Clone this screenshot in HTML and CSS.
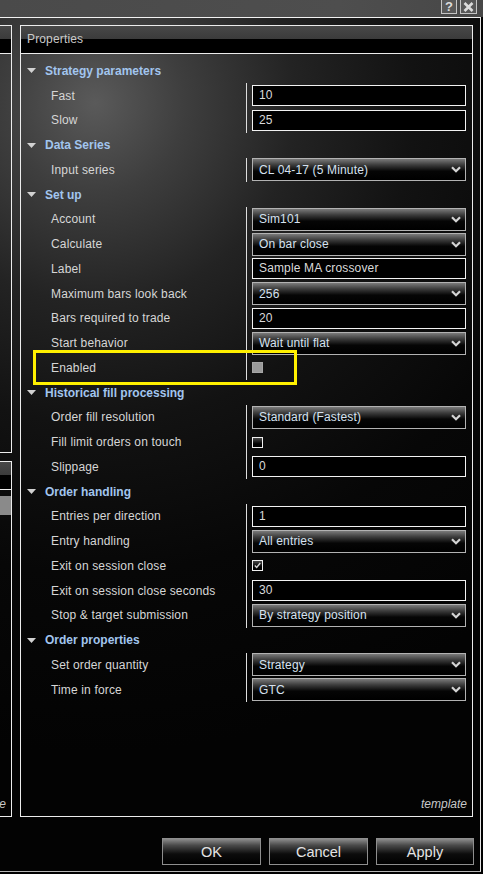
FILE: index.html
```html
<!DOCTYPE html>
<html lang="en">
<head>
    <meta charset="UTF-8">
    <meta name="viewport" content="width=device-width, initial-scale=1.0">
    <title>Strategy Properties</title>
    <link rel="stylesheet" href="styles.css">
</head>
<body>
    <!-- Window title bar -->
    <div class="titlebar">
        <span class="tb-btn">?</span>
        <span class="tb-btn">
            <svg width="11" height="10" viewBox="0 0 11 10"><path d="M1.5 1l8 8M9.5 1l-8 8" stroke="#dcdcdc" stroke-width="2.6" fill="none"/></svg>
        </span>
    </div>

    <div class="frame">
        <div class="main">
            <!-- Strategy list (cut off on the left) -->
            <div class="side">
                <div class="side-box side-top">
                    <div class="box-head"></div>
                </div>
                <div class="side-box side-bottom">
                    <div class="box-head"></div>
                    <div class="side-sel"></div>
                    <div class="box-foot"><span>template</span></div>
                </div>
            </div>

            <!-- Property grid -->
            <div class="props">
                <div class="box-head props-head">Properties</div>
                <div class="props-body">
                    <div class="cat"><svg class="caret" width="9" height="5" viewBox="0 0 9 5"><path d="M0 0h9L4.5 5z" fill="#d2d2d2"/></svg>Strategy parameters</div>
                    <div class="prop"><div class="prop-name">Fast</div><div class="prop-val"><div class="field">10</div></div></div>
                    <div class="prop"><div class="prop-name">Slow</div><div class="prop-val"><div class="field">25</div></div></div>

                    <div class="cat"><svg class="caret" width="9" height="5" viewBox="0 0 9 5"><path d="M0 0h9L4.5 5z" fill="#d2d2d2"/></svg>Data Series</div>
                    <div class="prop"><div class="prop-name">Input series</div><div class="prop-val"><div class="select"><span>CL 04-17 (5 Minute)</span><svg class="chev" width="10" height="7" viewBox="0 0 10 7"><path d="M1 1.2l4 4 4-4" stroke="#d4d4d4" stroke-width="2.2" fill="none"/></svg></div></div></div>

                    <div class="cat"><svg class="caret" width="9" height="5" viewBox="0 0 9 5"><path d="M0 0h9L4.5 5z" fill="#d2d2d2"/></svg>Set up</div>
                    <div class="prop"><div class="prop-name">Account</div><div class="prop-val"><div class="select"><span>Sim101</span><svg class="chev" width="10" height="7" viewBox="0 0 10 7"><path d="M1 1.2l4 4 4-4" stroke="#d4d4d4" stroke-width="2.2" fill="none"/></svg></div></div></div>
                    <div class="prop"><div class="prop-name">Calculate</div><div class="prop-val"><div class="select"><span>On bar close</span><svg class="chev" width="10" height="7" viewBox="0 0 10 7"><path d="M1 1.2l4 4 4-4" stroke="#d4d4d4" stroke-width="2.2" fill="none"/></svg></div></div></div>
                    <div class="prop"><div class="prop-name">Label</div><div class="prop-val"><div class="field">Sample MA crossover</div></div></div>
                    <div class="prop"><div class="prop-name">Maximum bars look back</div><div class="prop-val"><div class="select"><span>256</span><svg class="chev" width="10" height="7" viewBox="0 0 10 7"><path d="M1 1.2l4 4 4-4" stroke="#d4d4d4" stroke-width="2.2" fill="none"/></svg></div></div></div>
                    <div class="prop"><div class="prop-name">Bars required to trade</div><div class="prop-val"><div class="field">20</div></div></div>
                    <div class="prop"><div class="prop-name">Start behavior</div><div class="prop-val"><div class="select"><span>Wait until flat</span><svg class="chev" width="10" height="7" viewBox="0 0 10 7"><path d="M1 1.2l4 4 4-4" stroke="#d4d4d4" stroke-width="2.2" fill="none"/></svg></div></div></div>
                    <div class="prop prop-marked">
                        <div class="prop-name">Enabled</div><div class="prop-val"><span class="check check-off"></span></div>
                        <!-- annotation box drawn over the row -->
                        <div class="highlight"></div>
                    </div>

                    <div class="cat"><svg class="caret" width="9" height="5" viewBox="0 0 9 5"><path d="M0 0h9L4.5 5z" fill="#d2d2d2"/></svg>Historical fill processing</div>
                    <div class="prop"><div class="prop-name">Order fill resolution</div><div class="prop-val"><div class="select"><span>Standard (Fastest)</span><svg class="chev" width="10" height="7" viewBox="0 0 10 7"><path d="M1 1.2l4 4 4-4" stroke="#d4d4d4" stroke-width="2.2" fill="none"/></svg></div></div></div>
                    <div class="prop"><div class="prop-name">Fill limit orders on touch</div><div class="prop-val"><span class="check"></span></div></div>
                    <div class="prop"><div class="prop-name">Slippage</div><div class="prop-val"><div class="field">0</div></div></div>

                    <div class="cat"><svg class="caret" width="9" height="5" viewBox="0 0 9 5"><path d="M0 0h9L4.5 5z" fill="#d2d2d2"/></svg>Order handling</div>
                    <div class="prop"><div class="prop-name">Entries per direction</div><div class="prop-val"><div class="field">1</div></div></div>
                    <div class="prop"><div class="prop-name">Entry handling</div><div class="prop-val"><div class="select"><span>All entries</span><svg class="chev" width="10" height="7" viewBox="0 0 10 7"><path d="M1 1.2l4 4 4-4" stroke="#d4d4d4" stroke-width="2.2" fill="none"/></svg></div></div></div>
                    <div class="prop"><div class="prop-name">Exit on session close</div><div class="prop-val"><span class="check"><svg width="9" height="9" viewBox="0 0 9 9"><path d="M1.8 4.4l1.9 2 3.6-4.4" stroke="#d8d8d8" stroke-width="1.4" fill="none"/></svg></span></div></div>
                    <div class="prop"><div class="prop-name">Exit on session close seconds</div><div class="prop-val"><div class="field">30</div></div></div>
                    <div class="prop"><div class="prop-name">Stop &amp; target submission</div><div class="prop-val"><div class="select"><span>By strategy position</span><svg class="chev" width="10" height="7" viewBox="0 0 10 7"><path d="M1 1.2l4 4 4-4" stroke="#d4d4d4" stroke-width="2.2" fill="none"/></svg></div></div></div>

                    <div class="cat"><svg class="caret" width="9" height="5" viewBox="0 0 9 5"><path d="M0 0h9L4.5 5z" fill="#d2d2d2"/></svg>Order properties</div>
                    <div class="prop"><div class="prop-name">Set order quantity</div><div class="prop-val"><div class="select"><span>Strategy</span><svg class="chev" width="10" height="7" viewBox="0 0 10 7"><path d="M1 1.2l4 4 4-4" stroke="#d4d4d4" stroke-width="2.2" fill="none"/></svg></div></div></div>
                    <div class="prop"><div class="prop-name">Time in force</div><div class="prop-val"><div class="select"><span>GTC</span><svg class="chev" width="10" height="7" viewBox="0 0 10 7"><path d="M1 1.2l4 4 4-4" stroke="#d4d4d4" stroke-width="2.2" fill="none"/></svg></div></div></div>
                </div>
                <div class="box-foot"><span>template</span></div>
            </div>
        </div>

        <!-- Dialog buttons -->
        <div class="actions">
            <button class="btn btn-ok">OK</button>
            <button class="btn btn-cancel">Cancel</button>
            <button class="btn btn-apply">Apply</button>
        </div>
    </div>
</body>
</html>
```

FILE: styles.css
```css
:root {
    --line: #ececec;
    --label: #d6d6d6;
    --category: #a2c5ee;
    --value: #dadada;
}

body {
    margin: 0;
    width: 483px;
    height: 874px;
    overflow: hidden;
    background: #000;
    font-family: 'Liberation Sans', Arial, sans-serif;
    font-size: 12px;
    letter-spacing: 0.15px;
    color: var(--label);
}

/* title bar */
.titlebar {
    height: 17px;
    background: linear-gradient(to right, #4a4a4a, #4e4e4e 70%, #474747);
    display: flex;
    justify-content: flex-end;
    align-items: flex-start;
    gap: 3px;
    padding-right: 6px;
}

.tb-btn {
    height: 14px;
    width: 16px;
    box-sizing: border-box;
    border: 1px solid #c4c4c4;
    border-top: none;
    background: #585858;
    color: #dcdcdc;
    font-weight: bold;
    font-size: 13px;
    line-height: 13px;
    display: flex;
    align-items: center;
    justify-content: center;
}

.tb-btn:last-child {
    width: 17px;
}

/* main window */
.frame {
    width: 481px;
    height: 855px;
    box-sizing: border-box;
    border-top: 1px solid #f2f2f2;
    border-right: 1px solid #e6e6e6;
    border-bottom: 1px solid #b4b4b4;
    padding-top: 7px;
    background: radial-gradient(circle at 95px 85px, #5a5a5a 0, #3e3e3e 90px, #232323 200px, #121212 320px, #070707 470px, #030303 650px);
}

.main {
    display: flex;
    height: 792px;
}

.side {
    width: 12px;
    display: flex;
    flex-direction: column;
    gap: 8px;
    margin-right: 8px;
}

.side-box {
    border: 1px solid var(--line);
    border-left: none;
    box-sizing: border-box;
    display: flex;
    flex-direction: column;
    overflow: hidden;
}

.side-top {
    height: 428px;
}

.side-bottom {
    flex: 1;
}

.side-sel {
    height: 19px;
    margin-top: 6px;
    background: #8a8a8a;
}

.box-head {
    height: 27px;
    flex-shrink: 0;
    border-bottom: 1px solid var(--line);
    background: linear-gradient(#484848, #3b3b3b 48%, #000 48%);
}

.box-foot {
    margin-top: auto;
    display: flex;
    justify-content: flex-end;
    padding: 0 5px 5px;
    line-height: 14px;
    font-style: italic;
    letter-spacing: 0;
    color: #c8c8c8;
    white-space: nowrap;
}

.box-foot span {
    flex-shrink: 0;
}

/* property grid */
.props {
    width: 453px;
    box-sizing: border-box;
    border: 1px solid var(--line);
    display: flex;
    flex-direction: column;
}

.props-head {
    padding-left: 6px;
    line-height: 27px;
    color: #cacaca;
}

.props-body {
    padding-top: 4.5px;
}

.cat {
    height: 24.76px;
    display: flex;
    align-items: center;
    padding-left: 6px;
    font-weight: bold;
    letter-spacing: 0;
    color: var(--category);
}

.caret {
    margin-right: 9px;
}

.prop {
    height: 24.76px;
    display: flex;
}

.prop-marked {
    position: relative;
}

.prop-name {
    width: 226px;
    box-sizing: border-box;
    padding-left: 30px;
    border-right: 1px solid #dedede;
    display: flex;
    align-items: center;
    white-space: nowrap;
}

.prop-val {
    flex: 1;
    padding: 0 6px 0 5px;
    display: flex;
    align-items: center;
}

.field {
    width: 100%;
    height: 21px;
    box-sizing: border-box;
    border: 1px solid #f2f2f2;
    background: #000;
    padding-left: 6px;
    line-height: 19px;
    color: var(--value);
}

.select {
    width: 100%;
    height: 23px;
    box-sizing: border-box;
    border: 1px solid #b2b2b2;
    background: linear-gradient(#7a7a7a, #3c3c3c 28%, #050505 58%, #000);
    padding: 0 4px 0 6px;
    display: flex;
    align-items: center;
    justify-content: space-between;
    color: #d6e2f0;
}

.check {
    width: 11px;
    height: 11px;
    box-sizing: border-box;
    border: 1px solid #f0f0f0;
    background: linear-gradient(#4a4a4a, #000 65%);
    display: flex;
}

.check-off {
    border-color: #a6a6a6;
    background: #9a9a9a;
}

.highlight {
    position: absolute;
    left: 12px;
    top: -6px;
    width: 264px;
    height: 35px;
    box-sizing: border-box;
    border: 3px solid #fff000;
}

/* dialog buttons */
.actions {
    display: flex;
    justify-content: flex-end;
    gap: 8px;
    padding-right: 6px;
    margin-top: 21px;
}

.btn {
    width: 99px;
    height: 27px;
    border: 1px solid #8e8e8e;
    background: linear-gradient(#8c8c8c, #4a4a4a 25%, #0c0c0c 60%, #000);
    color: #e4e4e4;
    font-family: 'Liberation Sans', Arial, sans-serif;
    font-size: 14.5px;
    letter-spacing: 0;
    padding: 0;
}

.btn-apply {
    width: 98px;
}
```
